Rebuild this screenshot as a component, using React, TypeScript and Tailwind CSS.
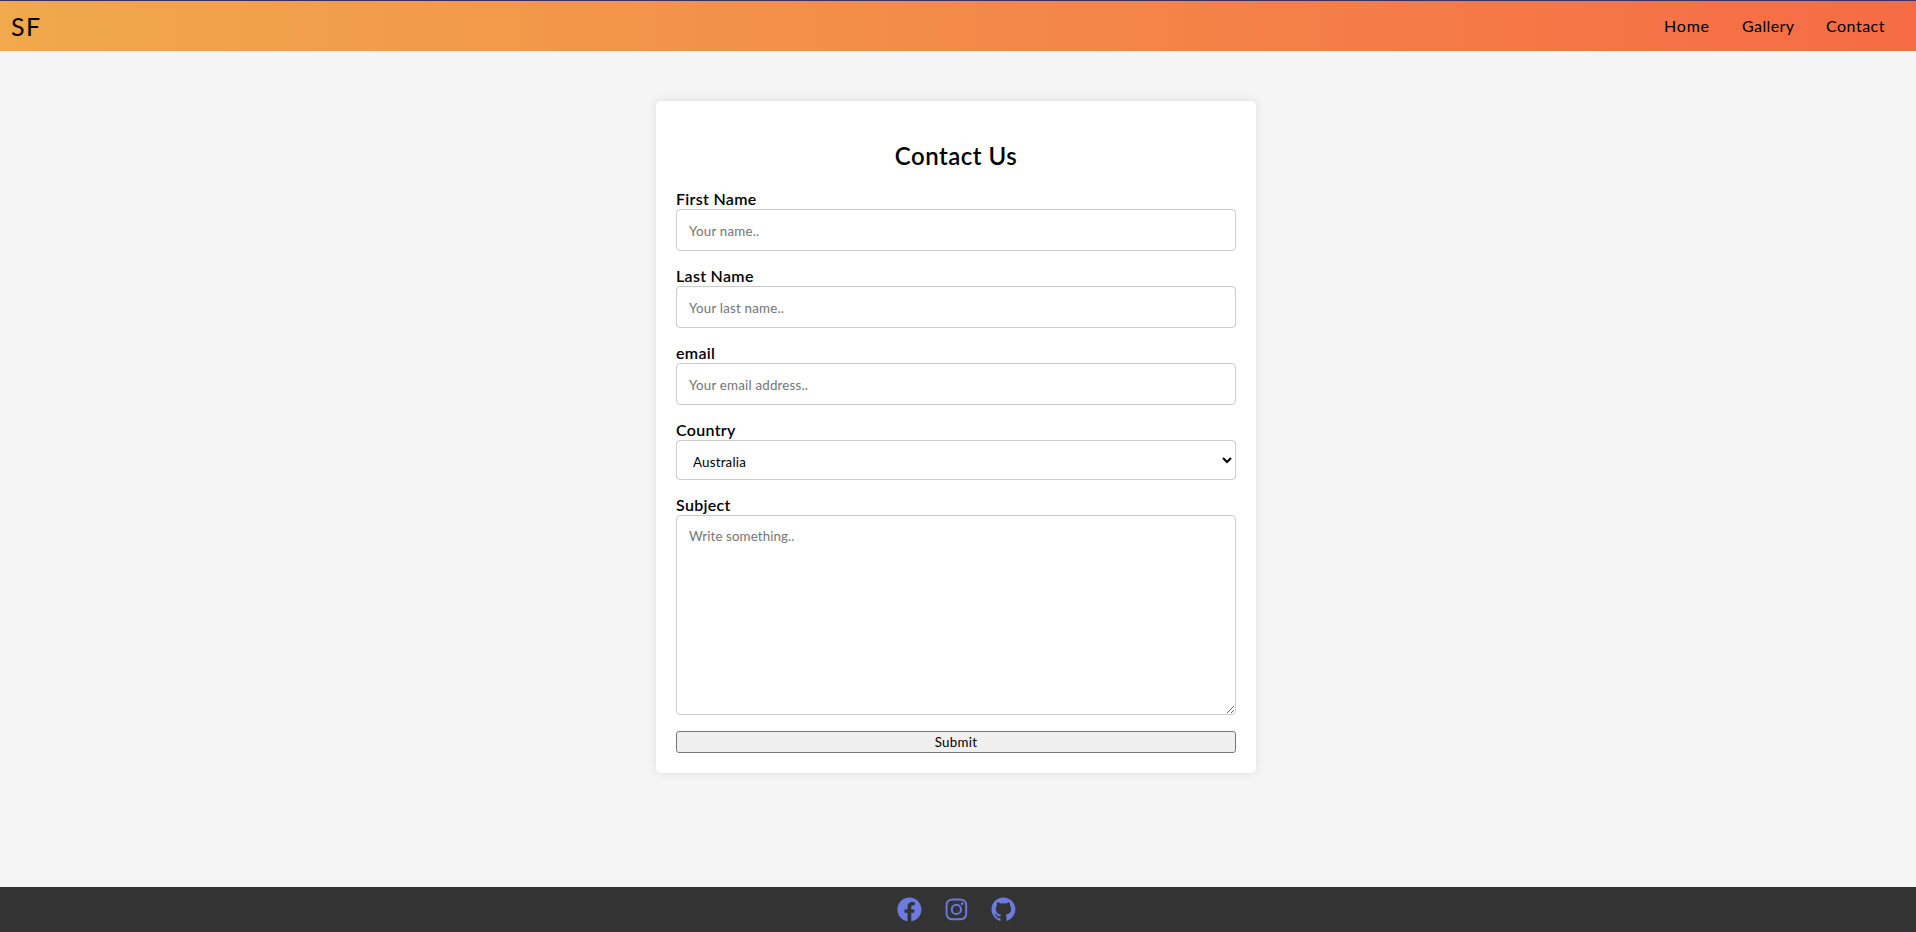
import type { ReactNode } from "react";
import { BiLogoFacebookCircle, BiLogoInstagram, BiLogoGithub } from "react-icons/bi";

const links = [
  { label: "Home", style: "w-[46px] tracking-[0.8px]" },
  { label: "Gallery", style: "w-[52px] tracking-[0.4px]" },
  { label: "Contact", style: "w-[58px] tracking-[0.5px]" },
];

const inputStyle =
  "block h-[42px] w-full rounded border border-[#ccc] bg-white px-3 pt-px text-[13.33px] tracking-[0.2px] text-black placeholder:text-[#757575] focus:outline-none";

function Field({ id, label, children }: { id: string; label: string; children: ReactNode }) {
  return (
    <div className="mb-4">
      <label htmlFor={id} className="block h-[19px] text-base leading-[18px] font-semibold tracking-[0.3px]">
        {label}
      </label>
      {children}
    </div>
  );
}

export default function App() {
  return (
    <div className="flex h-[932px] flex-col bg-[#f5f5f5] font-['Lato',sans-serif] text-black">
      <header className="flex h-[51px] shrink-0 items-center justify-between border-t border-[#3b3060] bg-linear-[90deg,#f0a94b,#f66b45] pr-8 pl-[11px]">
        <a href="#" className="text-[25px] leading-[30px] tracking-[1.5px]">
          SF
        </a>
        <nav className="flex gap-8">
          {links.map((link) => (
            <a key={link.label} href="#" className={`whitespace-nowrap text-base leading-5 ${link.style}`}>
              {link.label}
            </a>
          ))}
        </nav>
      </header>

      <main className="flex flex-1 justify-center pr-1 pt-[50px]">
        <form className="h-[672px] w-[600px] rounded-[5px] bg-white p-5 shadow-[0_0_10px_rgba(0,0,0,0.1)]">
          <h2 className="mt-5 mb-5 h-[29px] text-center text-2xl leading-[29px] font-semibold tracking-[0.5px]">
            Contact Us
          </h2>
          <Field id="fname" label="First Name">
            <input id="fname" placeholder="Your name.." className={inputStyle} />
          </Field>
          <Field id="lname" label="Last Name">
            <input id="lname" placeholder="Your last name.." className={inputStyle} />
          </Field>
          <Field id="email" label="email">
            <input id="email" placeholder="Your email address.." className={inputStyle} />
          </Field>
          <Field id="country" label="Country">
            <select
              id="country"
              className="block h-10 w-full rounded border border-[#ccc] bg-white px-3 pt-1 text-[13.33px] tracking-[0.2px]"
            >
              <option>Australia</option>
              <option>Canada</option>
              <option>USA</option>
            </select>
          </Field>
          <Field id="subject" label="Subject">
            <textarea
              id="subject"
              placeholder="Write something.."
              className="block h-[200px] w-full resize rounded border border-[#ccc] bg-white p-3 text-[13.33px] leading-[17px] tracking-[0.1px] placeholder:text-[#757575]"
            />
          </Field>
          <button
            type="button"
            className="block h-[22px] w-full rounded-[3px] border border-[#767676] bg-[#efefef] text-[13.33px] leading-5 tracking-[0.3px]"
          >
            Submit
          </button>
        </form>
      </main>

      <footer className="flex h-[45px] shrink-0 items-center justify-center gap-[18px] bg-[#333] pr-[3px] text-[28.8px] text-[#6b7bdf]">
        <a href="#" aria-label="Facebook">
          <BiLogoFacebookCircle />
        </a>
        <a href="#" aria-label="Instagram">
          <BiLogoInstagram />
        </a>
        <a href="#" aria-label="GitHub">
          <BiLogoGithub />
        </a>
      </footer>
    </div>
  );
}
